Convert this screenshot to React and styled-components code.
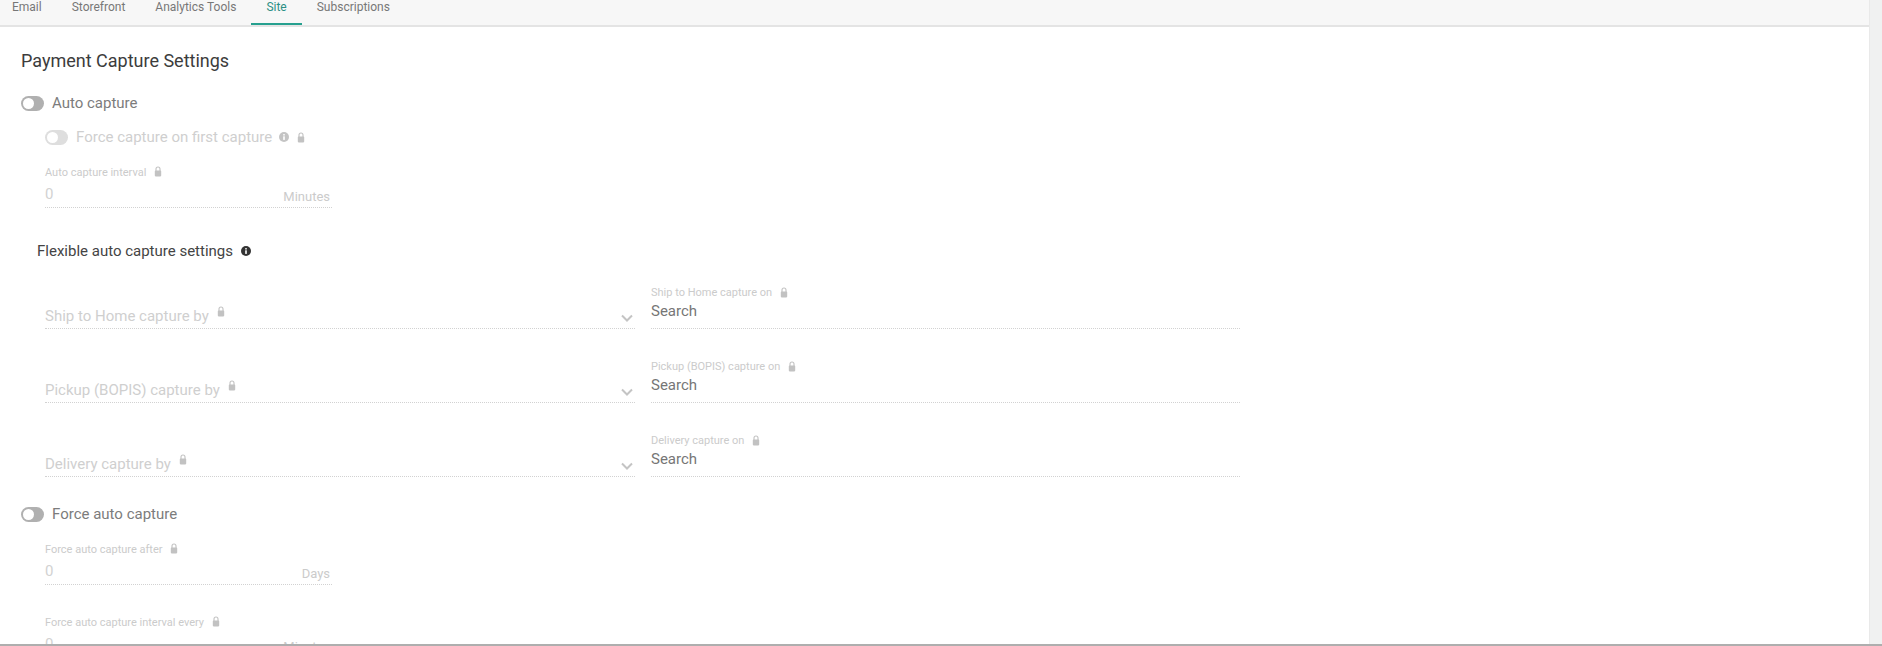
import React from "react";
import styled, { createGlobalStyle } from "styled-components";

const Global = createGlobalStyle`
  html, body { margin: 0; padding: 0; background: #f0f1f1; overflow: hidden; }
  body { font-family: Roboto, "Liberation Sans", sans-serif; }
`;

const Frame = styled.div`
  width: 1882px;
  height: 646px;
  box-sizing: border-box;
  border-bottom: 2px solid #aeaeae;
  overflow: hidden;
  display: flex;
`;
const Main = styled.div`
  width: 1870px;
  display: flex;
  flex-direction: column;
  border-right: 1px solid #e9e9e9;
  box-sizing: border-box;
`;
const ScrollTrack = styled.div`
  flex: 1;
  background: #f0f1f1;
`;

const TabBar = styled.div`
  height: 27px;
  flex-shrink: 0;
  box-sizing: border-box;
  background: #f7f7f7;
  border-bottom: 2px solid #e4e4e4;
  display: flex;
`;
const Tab = styled.div`
  height: 25px;
  box-sizing: border-box;
  padding: 0 15px;
  font-size: 12px;
  line-height: 14px;
  color: ${(p) => (p.$active ? "#2c8f85" : "#777")};
  border-bottom: 2px solid ${(p) => (p.$active ? "#26a08f" : "transparent")};
  margin-left: ${(p) => (p.$first ? "-3px" : "0")};
`;

const Card = styled.div`
  flex: 1;
  background: #fff;
  padding: 22px 0 0 21px;
  overflow: hidden;
`;
const Title = styled.h2`
  margin: 0;
  font-size: 18px;
  line-height: 24px;
  font-weight: 400;
  color: #3c3c3c;
`;

const ToggleRow = styled.div`
  display: flex;
  align-items: center;
  height: 18px;
  margin-top: ${(p) => p.$top}px;
  margin-left: ${(p) => (p.$nested ? "24px" : "0")};
  color: ${(p) => (p.$disabled ? "#cfcfcf" : "#7c7c7c")};
  font-size: 15px;
`;
const Track = styled.span`
  width: 23px;
  height: 15px;
  border-radius: 8px;
  background: ${(p) => (p.$disabled ? "#dedede" : "#b0b0b0")};
  margin-right: 8px;
  padding: 2px;
  box-sizing: border-box;
  display: flex;
`;
const Knob = styled.span`
  width: 11px;
  height: 11px;
  border-radius: 50%;
  background: #fff;
`;

const Adorn = styled.span`
  display: inline-flex;
  margin-left: ${(p) => p.$left}px;
  position: relative;
  top: ${(p) => p.$up ?? 0}px;
`;

const NumberField = styled.div`
  width: 287px;
  margin-left: 24px;
  margin-top: ${(p) => p.$top}px;
`;
const SmallLabel = styled.div`
  display: flex;
  align-items: center;
  font-size: 11px;
  line-height: 14px;
  color: #cbcbcb;
`;
const ValueRow = styled.div`
  display: flex;
  justify-content: space-between;
  align-items: flex-end;
  margin-top: 4px;
  padding-bottom: 2px;
  border-bottom: 1px dotted #d2d2d2;
`;
const Value = styled.span`
  font-size: 15px;
  line-height: 20px;
  color: #d2d2d2;
  margin-bottom: 1px;
`;
const Unit = styled.span`
  font-size: 13px;
  line-height: 16px;
  color: #cbcbcb;
  padding-right: 2px;
`;

const SubHeading = styled.div`
  display: flex;
  align-items: center;
  margin: 33px 0 0 16px;
  font-size: 15px;
  line-height: 20px;
  color: #444;
`;

const CaptureGrid = styled.div`
  display: grid;
  grid-template-columns: 590px 589px;
  column-gap: 16px;
  row-gap: 31px;
  margin: 25px 0 0 24px;
`;
const SelectField = styled.div`
  display: flex;
  justify-content: space-between;
  align-items: flex-end;
  padding-bottom: 2px;
  border-bottom: 1px dotted #d2d2d2;
`;
const SelectLabel = styled.span`
  display: flex;
  font-size: 15px;
  line-height: 20px;
  color: #cfcfcf;
`;
const Chevron = styled.svg`
  width: 12px;
  height: 8px;
  margin: 0 2px 4px 0;
`;
const SearchField = styled.div`
  padding-bottom: 7px;
  border-bottom: 1px dotted #d2d2d2;
`;
const SearchText = styled.div`
  margin-top: 1px;
  font-size: 15px;
  line-height: 20px;
  color: #767676;
`;

const Lock = ({ color = "#c2c2c2" }) => (
  <svg width="8" height="11" viewBox="0 0 8 11">
    <path d="M2 5V3a2 2 0 0 1 4 0V5" fill="none" stroke={color} strokeWidth="1.1" />
    <rect x="0.8" y="4.6" width="6.4" height="5.8" rx="0.8" fill={color} />
  </svg>
);

const Info = ({ color }) => (
  <svg width="10" height="10" viewBox="0 0 10 10">
    <circle cx="5" cy="5" r="5" fill={color} />
    <rect x="4.2" y="4.3" width="1.6" height="3.6" fill="#fff" />
    <rect x="4.2" y="2.1" width="1.6" height="1.4" fill="#fff" />
  </svg>
);

const rows = [
  { by: "Ship to Home capture by", on: "Ship to Home capture on" },
  { by: "Pickup (BOPIS) capture by", on: "Pickup (BOPIS) capture on" },
  { by: "Delivery capture by", on: "Delivery capture on" },
];

const tabs = ["Email", "Storefront", "Analytics Tools", "Site", "Subscriptions"];

const Field = ({ label, unit, top }) => (
  <NumberField $top={top}>
    <SmallLabel>
      {label}
      <Adorn $left={8} $up={-2}>
        <Lock />
      </Adorn>
    </SmallLabel>
    <ValueRow>
      <Value>0</Value>
      <Unit>{unit}</Unit>
    </ValueRow>
  </NumberField>
);

const App = () => (
  <Frame>
    <Global />
    <Main>
      <TabBar>
        {tabs.map((t, i) => (
          <Tab key={t} $first={i === 0} $active={t === "Site"}>
            {t}
          </Tab>
        ))}
      </TabBar>
      <Card>
        <Title>Payment Capture Settings</Title>
        <ToggleRow $top={21}>
          <Track>
            <Knob />
          </Track>
          Auto capture
        </ToggleRow>
        <ToggleRow $top={16} $nested $disabled>
          <Track $disabled>
            <Knob />
          </Track>
          Force capture on first capture
          <Adorn $left={7}>
            <Info color="#c4c4c4" />
          </Adorn>
          <Adorn $left={8}>
            <Lock />
          </Adorn>
        </ToggleRow>
        <Field label="Auto capture interval" unit="Minutes" top={20} />
        <SubHeading>
          Flexible auto capture settings
          <Adorn $left={8}>
            <Info color="#333" />
          </Adorn>
        </SubHeading>
        <CaptureGrid>
          {rows.map((r) => (
            <React.Fragment key={r.by}>
              <SelectField>
                <SelectLabel>
                  {r.by}
                  <Adorn $left={8} $up={0}>
                    <Lock />
                  </Adorn>
                </SelectLabel>
                <Chevron viewBox="0 0 12 8">
                  <path d="M1 1.5l5 5 5-5" fill="none" stroke="#c4c4c4" strokeWidth="2" />
                </Chevron>
              </SelectField>
              <SearchField>
                <SmallLabel>
                  {r.on}
                  <Adorn $left={8} $up={-1}>
                    <Lock />
                  </Adorn>
                </SmallLabel>
                <SearchText>Search</SearchText>
              </SearchField>
            </React.Fragment>
          ))}
        </CaptureGrid>
        <ToggleRow $top={28}>
          <Track>
            <Knob />
          </Track>
          Force auto capture
        </ToggleRow>
        <Field label="Force auto capture after" unit="Days" top={20} />
        <Field label="Force auto capture interval every" unit="Minutes" top={31} />
      </Card>
    </Main>
    <ScrollTrack />
  </Frame>
);

export default App;
